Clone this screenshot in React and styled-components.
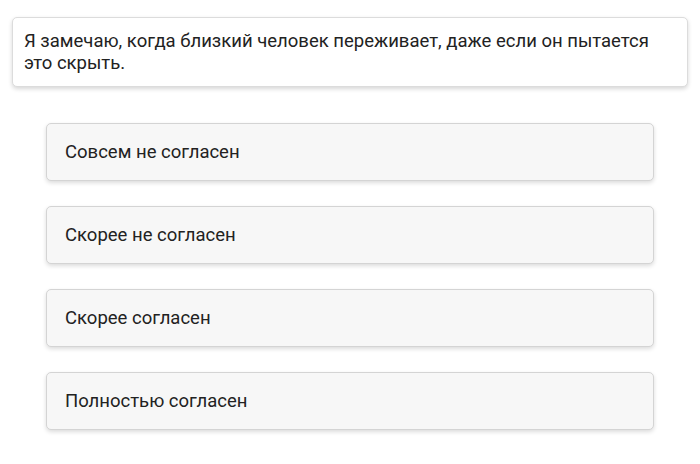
import React from "react";
import styled, { createGlobalStyle } from "styled-components";

const GlobalStyle = createGlobalStyle`
  * {
    box-sizing: border-box;
  }

  body {
    margin: 0;
    background: #ffffff;
    font-family: Roboto, "Liberation Sans", sans-serif;
    color: #222222;
  }
`;

const Page = styled.div`
  padding: 17px 12px;
  display: flex;
  flex-direction: column;
  gap: 36px;
`;

const Question = styled.div`
  background: #ffffff;
  border: 1px solid #dcdcdc;
  border-radius: 5px;
  box-shadow: 0 2px 4px rgba(0, 0, 0, 0.16);
  padding: 12px 11px;
  font-size: 18.5px;
  line-height: 22px;
`;

const Options = styled.div`
  margin: 0 34px;
  display: flex;
  flex-direction: column;
  gap: 25px;
`;

const Option = styled.button`
  display: block;
  width: 100%;
  text-align: left;
  background: #f7f7f7;
  border: 1px solid #d4d4d4;
  border-radius: 5px;
  box-shadow: 0 2px 4px rgba(0, 0, 0, 0.14);
  padding: 17px 18px;
  font-family: inherit;
  font-size: 18.5px;
  line-height: 22px;
  color: #222222;
  cursor: pointer;
`;

const answers = [
  "Совсем не согласен",
  "Скорее не согласен",
  "Скорее согласен",
  "Полностью согласен",
];

function App() {
  return (
    <React.Fragment>
      <GlobalStyle />
      <Page>
        <Question>
          Я замечаю, когда близкий человек переживает, даже если он пытается
          это скрыть.
        </Question>
        <Options>
          {answers.map(a => (
            <Option key={a}>{a}</Option>
          ))}
        </Options>
      </Page>
    </React.Fragment>
  );
}

export default App;
